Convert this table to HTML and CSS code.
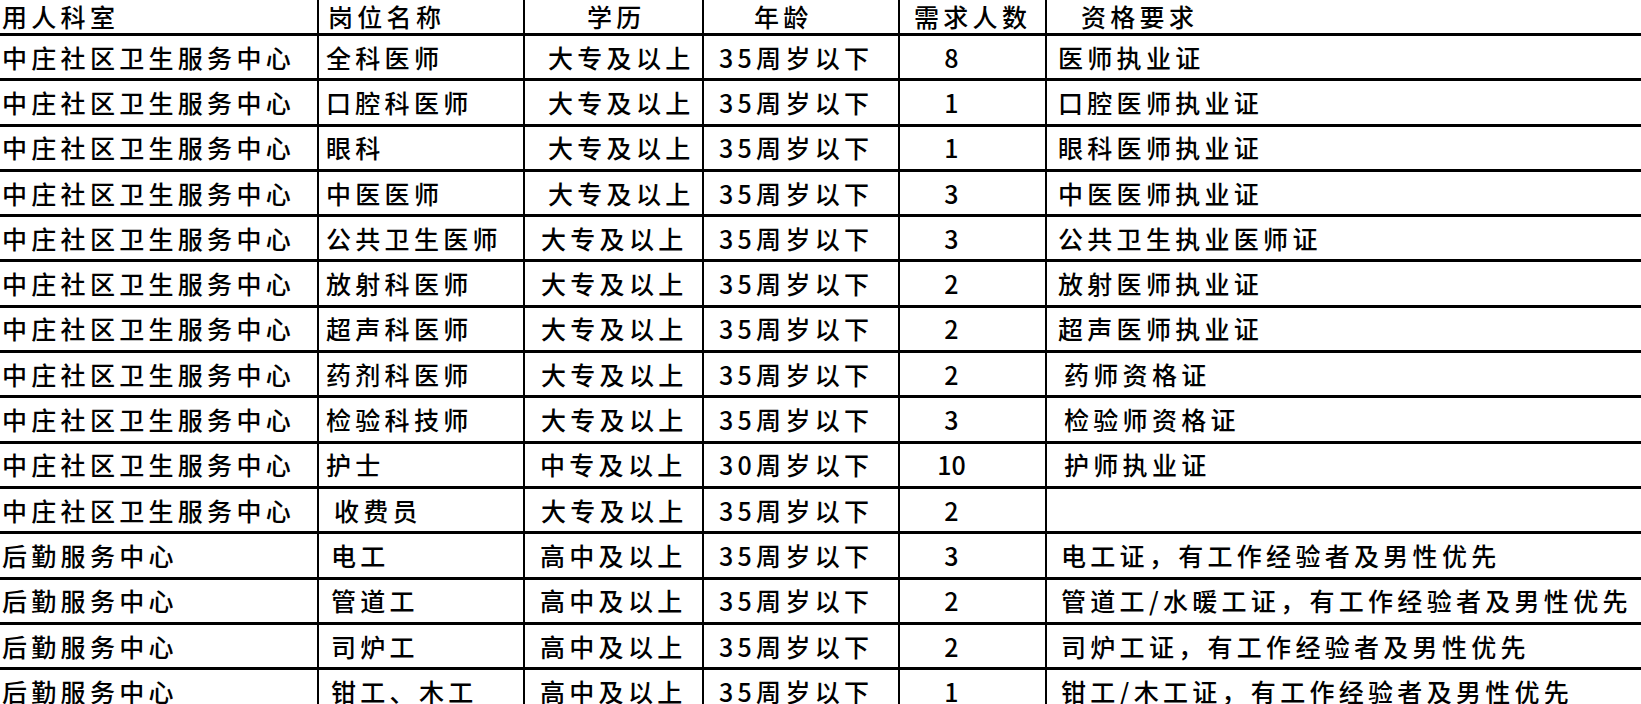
FILE: index.html
```html
<!DOCTYPE html>
<html lang="zh">
<head>
<meta charset="utf-8">
<title>招聘岗位</title>
<link rel="stylesheet" href="styles.css">
</head>
<body>
<div class="table">
  <div class="row head">
    <div class="cell c1">用人科室</div>
    <div class="cell c2 p10">岗位名称</div>
    <div class="cell c3 p63">学历</div>
    <div class="cell c4 p51">年龄</div>
    <div class="cell c5 p15">需求人数</div>
    <div class="cell c6 p35">资格要求</div>
  </div>
  <div class="row">
    <div class="cell c1">中庄社区卫生服务中心</div>
    <div class="cell c2">全科医师</div>
    <div class="cell c3 p24">大专及以上</div>
    <div class="cell c4">35周岁以下</div>
    <div class="cell c5 num">8</div>
    <div class="cell c6">医师执业证</div>
  </div>
  <div class="row">
    <div class="cell c1">中庄社区卫生服务中心</div>
    <div class="cell c2">口腔科医师</div>
    <div class="cell c3 p24">大专及以上</div>
    <div class="cell c4">35周岁以下</div>
    <div class="cell c5 num">1</div>
    <div class="cell c6">口腔医师执业证</div>
  </div>
  <div class="row">
    <div class="cell c1">中庄社区卫生服务中心</div>
    <div class="cell c2">眼科</div>
    <div class="cell c3 p24">大专及以上</div>
    <div class="cell c4">35周岁以下</div>
    <div class="cell c5 num">1</div>
    <div class="cell c6">眼科医师执业证</div>
  </div>
  <div class="row">
    <div class="cell c1">中庄社区卫生服务中心</div>
    <div class="cell c2">中医医师</div>
    <div class="cell c3 p24">大专及以上</div>
    <div class="cell c4">35周岁以下</div>
    <div class="cell c5 num">3</div>
    <div class="cell c6">中医医师执业证</div>
  </div>
  <div class="row">
    <div class="cell c1">中庄社区卫生服务中心</div>
    <div class="cell c2">公共卫生医师</div>
    <div class="cell c3">大专及以上</div>
    <div class="cell c4">35周岁以下</div>
    <div class="cell c5 num">3</div>
    <div class="cell c6">公共卫生执业医师证</div>
  </div>
  <div class="row">
    <div class="cell c1">中庄社区卫生服务中心</div>
    <div class="cell c2">放射科医师</div>
    <div class="cell c3">大专及以上</div>
    <div class="cell c4">35周岁以下</div>
    <div class="cell c5 num">2</div>
    <div class="cell c6">放射医师执业证</div>
  </div>
  <div class="row">
    <div class="cell c1">中庄社区卫生服务中心</div>
    <div class="cell c2">超声科医师</div>
    <div class="cell c3">大专及以上</div>
    <div class="cell c4">35周岁以下</div>
    <div class="cell c5 num">2</div>
    <div class="cell c6">超声医师执业证</div>
  </div>
  <div class="row">
    <div class="cell c1">中庄社区卫生服务中心</div>
    <div class="cell c2">药剂科医师</div>
    <div class="cell c3">大专及以上</div>
    <div class="cell c4">35周岁以下</div>
    <div class="cell c5 num">2</div>
    <div class="cell c6 p18">药师资格证</div>
  </div>
  <div class="row">
    <div class="cell c1">中庄社区卫生服务中心</div>
    <div class="cell c2">检验科技师</div>
    <div class="cell c3">大专及以上</div>
    <div class="cell c4">35周岁以下</div>
    <div class="cell c5 num">3</div>
    <div class="cell c6 p18">检验师资格证</div>
  </div>
  <div class="row">
    <div class="cell c1">中庄社区卫生服务中心</div>
    <div class="cell c2">护士</div>
    <div class="cell c3 p16">中专及以上</div>
    <div class="cell c4">30周岁以下</div>
    <div class="cell c5 num">10</div>
    <div class="cell c6 p18">护师执业证</div>
  </div>
  <div class="row">
    <div class="cell c1">中庄社区卫生服务中心</div>
    <div class="cell c2 p16">收费员</div>
    <div class="cell c3">大专及以上</div>
    <div class="cell c4">35周岁以下</div>
    <div class="cell c5 num">2</div>
    <div class="cell c6"></div>
  </div>
  <div class="row">
    <div class="cell c1">后勤服务中心</div>
    <div class="cell c2 p13">电工</div>
    <div class="cell c3 p16">高中及以上</div>
    <div class="cell c4">35周岁以下</div>
    <div class="cell c5 num">3</div>
    <div class="cell c6 p15">电工证，有工作经验者及男性优先</div>
  </div>
  <div class="row">
    <div class="cell c1">后勤服务中心</div>
    <div class="cell c2 p13">管道工</div>
    <div class="cell c3 p16">高中及以上</div>
    <div class="cell c4">35周岁以下</div>
    <div class="cell c5 num">2</div>
    <div class="cell c6 p15">管道工/水暖工证，有工作经验者及男性优先</div>
  </div>
  <div class="row">
    <div class="cell c1">后勤服务中心</div>
    <div class="cell c2 p13">司炉工</div>
    <div class="cell c3 p16">高中及以上</div>
    <div class="cell c4">35周岁以下</div>
    <div class="cell c5 num">2</div>
    <div class="cell c6 p15">司炉工证，有工作经验者及男性优先</div>
  </div>
  <div class="row">
    <div class="cell c1">后勤服务中心</div>
    <div class="cell c2 p13">钳工、木工</div>
    <div class="cell c3 p16">高中及以上</div>
    <div class="cell c4">35周岁以下</div>
    <div class="cell c5 num">1</div>
    <div class="cell c6 p15">钳工/木工证，有工作经验者及男性优先</div>
  </div>
</div>
</body>
</html>
```

FILE: styles.css
```css
html, body {
  margin: 0;
  padding: 0;
  background: #fff;
  overflow: hidden;
}

body {
  width: 1641px;
  height: 704px;
  font-family: "Noto Sans CJK SC", "Noto Sans", sans-serif;
  font-size: 25px;
  font-weight: 500;
  letter-spacing: 4.3px;
  color: #000;
}

.table {
  display: flex;
  flex-direction: column;
}

.row {
  display: grid;
  grid-template-columns: 317px 206px 179px 196px 147px 1fr;
  height: 45.3px;
  box-sizing: border-box;
  border-bottom: 3px solid #000;
}

.row.head {
  height: 36px;
}

.cell {
  display: flex;
  align-items: center;
  white-space: nowrap;
  line-height: 1.2;
  padding-bottom: 1px;
}

.c1 { padding-left: 2px; }
.c2 { border-left: 2px solid #000; padding-left: 7px; }
.c3 { border-left: 2px solid #000; padding-left: 16px; }
.c4 { border-left: 2px solid #000; padding-left: 15px; }
.c5 { border-left: 2px solid #000; }
.c6 { border-left: 2px solid #000; padding-left: 11px; overflow: hidden; }

.num {
  justify-content: center;
  padding-right: 42px;
  letter-spacing: 0;
}

.p10 { padding-left: 9px; }
.p13 { padding-left: 12px; }
.p15 { padding-left: 14px; }
.p16 { padding-left: 15px; }
.p18 { padding-left: 17px; }
.p24 { padding-left: 23px; }
.p35 { padding-left: 34px; }
.p51 { padding-left: 50px; }
.p63 { padding-left: 62px; }
.c5.p15 { padding-left: 14px; }
```
